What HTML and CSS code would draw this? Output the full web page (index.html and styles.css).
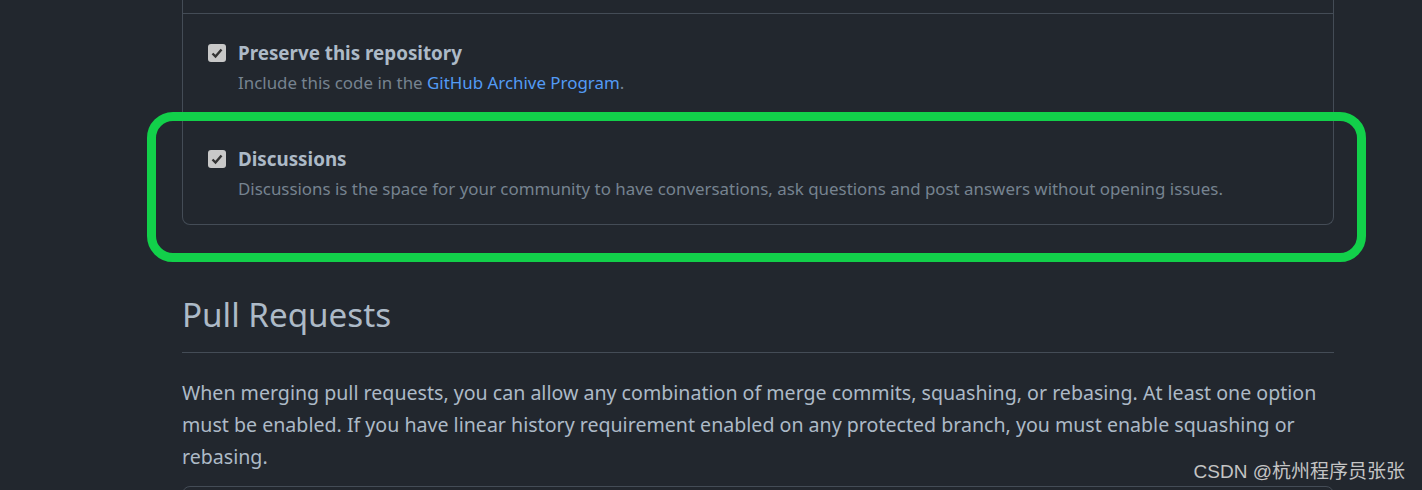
FILE: index.html
```html
<!DOCTYPE html>
<html lang="en">
<head>
  <meta charset="UTF-8" />
  <title>Repository settings</title>
  <link rel="stylesheet" href="styles.css">
</head>
<body>
  <div class="page">
    <div class="box">
      <div class="row-cut"></div>

      <div class="item">
        <span class="check">
          <svg viewBox="0 0 18 18" width="18" height="18"><path d="M4.5 9.5 L7.5 12.5 L13.5 5.5" fill="none" stroke="#333" stroke-width="2.4"/></svg>
        </span>
        <div class="item-text">
          <div class="label">Preserve this repository</div>
          <div class="note">Include this code in the <a href="#">GitHub Archive Program</a>.</div>
        </div>
      </div>

      <div class="item">
        <span class="check">
          <svg viewBox="0 0 18 18" width="18" height="18"><path d="M4.5 9.5 L7.5 12.5 L13.5 5.5" fill="none" stroke="#333" stroke-width="2.4"/></svg>
        </span>
        <div class="item-text">
          <div class="label">Discussions</div>
          <div class="note">Discussions is the space for your community to have conversations, ask questions and post answers without opening issues.</div>
        </div>
      </div>
    </div>

    <h2 class="subhead">Pull Requests</h2>
    <p class="intro">When merging pull requests, you can allow any combination of merge commits, squashing, or rebasing. At least one option must be enabled. If you have linear history requirement enabled on any protected branch, you must enable squashing or rebasing.</p>

    <div class="box box-next"></div>
  </div>

  <div class="highlight"></div>
  <div class="watermark">CSDN @杭州程序员张张</div>
</body>
</html>
```

FILE: styles.css
```css
body {
  margin: 0;
  background: #22272e;
  color: #adbac7;
  font-family: "Segoe UI", "Noto Sans", sans-serif;
  overflow: hidden;
}

.page {
  width: 1152px;
  margin-left: 182px;
}

.box {
  border: 1px solid #444c56;
  border-top: none;
  border-radius: 0 0 8px 8px;
}

.row-cut {
  height: 13px;
  border-bottom: 1px solid #444c56;
}

.item {
  display: flex;
  padding: 25px 25px 24px;
  border-bottom: 1px solid #444c56;
}

.item:last-child {
  border-bottom: none;
  padding-bottom: 23px;
}

.check {
  width: 18px;
  height: 18px;
  margin-top: 5px;
  border-radius: 3px;
  background: #c8c8c8;
  flex-shrink: 0;
}

.check svg {
  display: block;
}

.item-text {
  margin-left: 12px;
}

.label {
  font-size: 18.8px;
  font-weight: bold;
  line-height: 28px;
}

.note {
  margin-top: 4px;
  font-size: 16.9px;
  line-height: 24px;
  color: #768390;
}

.note a {
  color: #539bf5;
  text-decoration: none;
}

.subhead {
  margin: 68px 0 0;
  padding-bottom: 15px;
  border-bottom: 1px solid #444c56;
  font-size: 33.2px;
  font-weight: normal;
  line-height: 44px;
}

.intro {
  margin: 24px 0 0;
  font-size: 19.6px;
  line-height: 32px;
}

.box-next {
  margin-top: 13px;
  height: 40px;
  border-top: 1px solid #444c56;
  border-radius: 8px 8px 0 0;
}

.highlight {
  position: absolute;
  left: 147px;
  top: 112px;
  width: 1201px;
  height: 132px;
  border: 9px solid #12d04a;
  border-radius: 26px;
}

.watermark {
  position: absolute;
  right: 17px;
  top: 456px;
  font-family: "Liberation Sans", "Noto Sans CJK SC", sans-serif;
  font-size: 19px;
  color: #c4c4c4;
}
```
